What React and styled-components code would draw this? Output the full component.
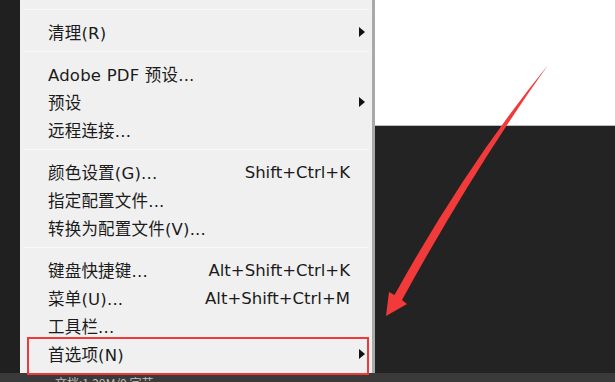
import React from 'react';
import styled, { createGlobalStyle } from 'styled-components';

const GlobalStyle = createGlobalStyle`
  html, body {
    margin: 0;
    padding: 0;
    background: #232323;
  }
  body {
    font-family: "DejaVu Sans", "Noto Sans CJK SC", sans-serif;
  }
`

const Screen = styled.div`
  position: relative;
  width: 615px;
  height: 382px;
  overflow: hidden;
  display: flex;
  flex-direction: column;
  background: #232323;
`

const Workspace = styled.div`
  display: flex;
  height: 373px;
`

const LeftStrip = styled.div`
  width: 20px;
  background: #202020;
`

const Menu = styled.div`
  width: 352px;
  background: #f0f0f0;
  border-right: 3px solid #a9a9a9;
  padding-top: 9px;
  display: flex;
  flex-direction: column;
`

const Separator = styled.div`
  height: 1px;
  margin: 0 3px 0 4px;
  background: #c9c9c9;
  border-bottom: 1px solid #fafafa;
`

const Section = styled.div`
  padding: 8px 0 5px;
`

const Item = styled.div`
  position: relative;
  height: 28px;
  display: grid;
  grid-template-columns: 1fr auto 22px;
  align-items: center;
  padding-left: 28px;
  font-size: 16.5px;
  color: #1b1b1b;
  white-space: nowrap;

  ${props => props.$marked && `
    &::after {
      content: '';
      position: absolute;
      left: 7px;
      right: 3px;
      top: -3px;
      bottom: -7px;
      border: 2px solid #f03a3a;
    }
  `}
`

const Label = styled.span`
  letter-spacing: 0.2px;
`

const Shortcut = styled.span`
  text-align: right;
`

const Submenu = styled.span`
  justify-self: center;
  width: 0;
  height: 0;
  border-top: 5px solid transparent;
  border-bottom: 5px solid transparent;
  border-left: 6px solid #111;
  margin-left: 2px;
`

const Canvas = styled.div`
  flex: 1;
  display: flex;
  flex-direction: column;
`

const Document = styled.div`
  height: 125px;
  background: #ffffff;
  border-bottom: 1px solid #bdbdbd;
`

const Pasteboard = styled.div`
  flex: 1;
  background: #232323;
`

const StatusBar = styled.div`
  height: 9px;
  background: #3a3a3a;
  padding-left: 55px;
  overflow: hidden;
  font-family: "Noto Sans CJK SC", sans-serif;
  font-size: 12px;
  line-height: 20px;
  color: #bdbdbd;
  white-space: nowrap;
`

const Annotation = styled.svg`
  position: absolute;
  left: 0;
  top: 0;
  pointer-events: none;
`

function MenuItem({ label, shortcut, sub, marked }) {
  return (
    <Item $marked={marked}>
      <Label>{label}</Label>
      <Shortcut>{shortcut}</Shortcut>
      {sub ? <Submenu /> : <span />}
    </Item>
  );
}

const groups = [
  [{ label: '清理(R)', sub: true }],
  [
    { label: 'Adobe PDF 预设...' },
    { label: '预设', sub: true },
    { label: '远程连接...' },
  ],
  [
    { label: '颜色设置(G)...', shortcut: 'Shift+Ctrl+K' },
    { label: '指定配置文件...' },
    { label: '转换为配置文件(V)...' },
  ],
  [
    { label: '键盘快捷键...', shortcut: 'Alt+Shift+Ctrl+K' },
    { label: '菜单(U)...', shortcut: 'Alt+Shift+Ctrl+M' },
    { label: '工具栏...' },
    { label: '首选项(N)', sub: true, marked: true },
  ],
];

function App() {
  return (
    <Screen>
      <GlobalStyle />
      <Workspace>
        <LeftStrip />
        <Menu>
          {groups.map((group, i) => (
            <React.Fragment key={i}>
              <Separator />
              <Section>
                {group.map(item => (
                  <MenuItem key={item.label} {...item} />
                ))}
              </Section>
            </React.Fragment>
          ))}
        </Menu>
        <Canvas>
          <Document />
          <Pasteboard />
        </Canvas>
      </Workspace>
      <StatusBar>文档:1.29M/0 字节</StatusBar>
      <Annotation width="615" height="382" viewBox="0 0 615 382">
        <path
          fill="#f23a3a"
          d="M548,65 Q472,172 402,300 L407,304 L386,316 L389,292 L394.5,295 Q466,166 548,65 Z"
        />
      </Annotation>
    </Screen>
  );
}

export default App;
